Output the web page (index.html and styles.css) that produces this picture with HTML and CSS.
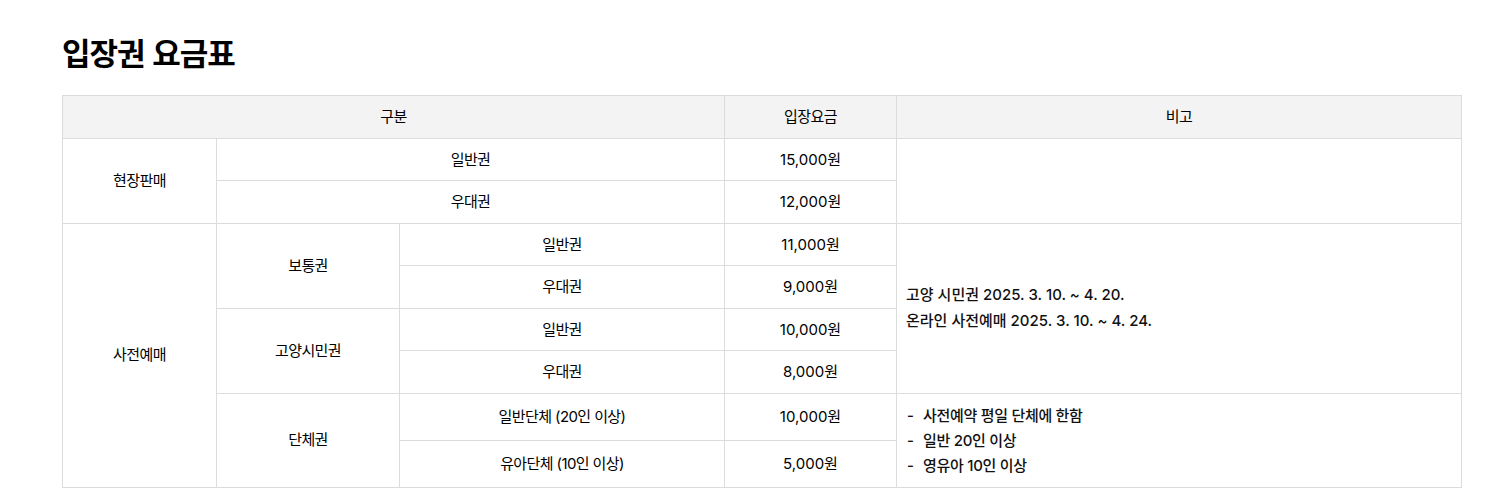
FILE: index.html
```html
<!DOCTYPE html>
<html lang="ko">
<head>
<meta charset="utf-8">
<title>입장권 요금표</title>
<link rel="stylesheet" href="styles.css">
</head>
<body>
<main class="page">
  <h2 class="title">입장권 요금표</h2>
  <table class="fee">
    <colgroup>
      <col class="c1"><col class="c2"><col class="c3"><col class="c4"><col class="c5">
    </colgroup>
    <thead>
      <tr><th colspan="3">구분</th><th>입장요금</th><th>비고</th></tr>
    </thead>
    <tbody>
      <tr><td rowspan="2">현장판매</td><td colspan="2">일반권</td><td class="price">15,000원</td><td rowspan="2" class="note"></td></tr>
      <tr><td colspan="2">우대권</td><td class="price">12,000원</td></tr>
      <tr><td rowspan="6">사전예매</td><td rowspan="2">보통권</td><td>일반권</td><td class="price">11,000원</td>
        <td rowspan="4" class="note"><p>고양 시민권 2025. 3. 10. ~ 4. 20.</p><p>온라인 사전예매 2025. 3. 10. ~ 4. 24.</p></td></tr>
      <tr><td>우대권</td><td class="price">9,000원</td></tr>
      <tr><td rowspan="2">고양시민권</td><td>일반권</td><td class="price">10,000원</td></tr>
      <tr><td>우대권</td><td class="price">8,000원</td></tr>
      <tr><td rowspan="2">단체권</td><td>일반단체 (20인 이상)</td><td class="price">10,000원</td>
        <td rowspan="2" class="note"><ul class="dash"><li>사전예약 평일 단체에 한함</li><li>일반 20인 이상</li><li>영유아 10인 이상</li></ul></td></tr>
      <tr><td>유아단체 (10인 이상)</td><td class="price">5,000원</td></tr>
    </tbody>
  </table>
</main>
</body>
</html>
```

FILE: styles.css
```css
html, body { margin: 0; padding: 0; background: #fff; }
body {
  font-family: Inter, "Noto Sans CJK KR", sans-serif;
  color: #000;
}
.page { padding: 28px 39px 0 62px; }
.title {
  margin: 0 0 20px;
  font-family: "Noto Sans CJK KR", sans-serif;
  font-size: 31px;
  font-weight: 700;
  line-height: 47px;
  letter-spacing: -1px;
  color: #000;
}
.fee {
  width: 1400px;
  border-collapse: collapse;
  table-layout: fixed;
  font-size: 15px;
  letter-spacing: -0.6px;
}
.c1 { width: 154px; }
.c2 { width: 183px; }
.c3 { width: 325px; }
.c4 { width: 172px; }
.c5 { width: 565px; }
.fee th, .fee td {
  border: 1px solid #dcdcdc;
  text-align: center;
  vertical-align: middle;
  padding: 10px;
  line-height: 21.5px;
  font-weight: 400;
}
.fee th { background: #f3f3f3; }
.fee td.price { font-size: 15px; font-weight: 400; letter-spacing: 0; color: #000; }
.fee td.note { text-align: left; padding: 9px 9px; }
.note p { margin: 0; line-height: 26px; font-size: 15px; font-weight: 500; letter-spacing: 0; color: #111; }
.dash { list-style: none; margin: 0; padding: 0; font-size: 15px; font-weight: 500; letter-spacing: -0.3px; color: #111; }
.dash li { line-height: 25px; }
.dash li::before { content: "-"; display: inline-block; width: 16px; padding-left: 1px; }
```
